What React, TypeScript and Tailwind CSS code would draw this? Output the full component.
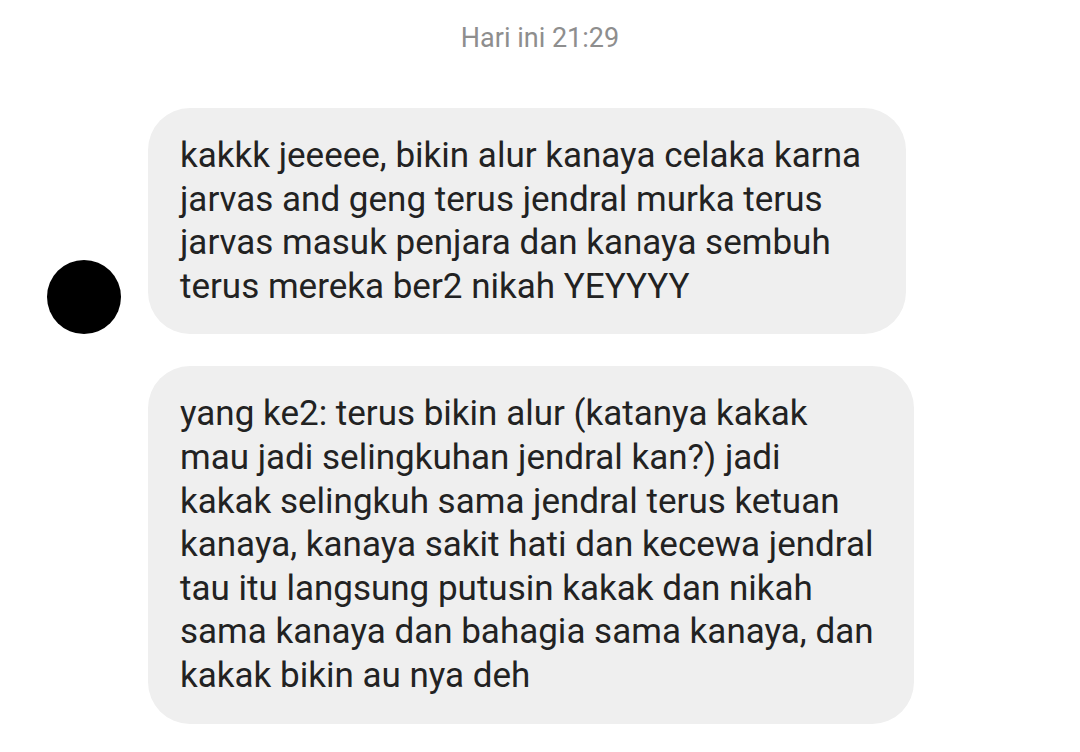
import React from 'react';

const first = [
  'kakkk jeeeee, bikin alur kanaya celaka karna',
  'jarvas and geng terus jendral murka terus',
  'jarvas masuk penjara dan kanaya sembuh',
  'terus mereka ber2 nikah YEYYYY',
];

const second = [
  'yang ke2: terus bikin alur (katanya kakak',
  'mau jadi selingkuhan jendral kan?) jadi',
  'kakak selingkuh sama jendral terus ketuan',
  'kanaya, kanaya sakit hati dan kecewa jendral',
  'tau itu langsung putusin kakak dan nikah',
  'sama kanaya dan bahagia sama kanaya, dan',
  'kakak bikin au nya deh',
];

const Bubble = ({ lines, width }: { lines: string[]; width: string }) => (
  <div className={`${width} rounded-[42px] bg-[#efefef] pl-8 pr-6 py-[26px] text-[35px] leading-[43.6px] text-[#222222]`}>
    {lines.map((l, i) => (
      <div key={i} className="whitespace-nowrap">{l}</div>
    ))}
  </div>
);

export default function App() {
  return (
    <div
      className="w-[1080px] h-[752px] bg-white overflow-hidden"
      style={{ fontFamily: 'Roboto, "Liberation Sans", sans-serif' }}
    >
      <div className="pt-[22px] text-center text-[27px] leading-[32px] text-[#8e8e8e]">Hari ini 21:29</div>
      <div className="mt-[54px] flex items-end gap-[27px] pl-[47px]">
        <div className="size-[74px] shrink-0 rounded-full bg-black" />
        <Bubble lines={first} width="w-[758px]" />
      </div>
      <div className="mt-8 pl-[148px]">
        <Bubble lines={second} width="w-[766px]" />
      </div>
    </div>
  );
}
